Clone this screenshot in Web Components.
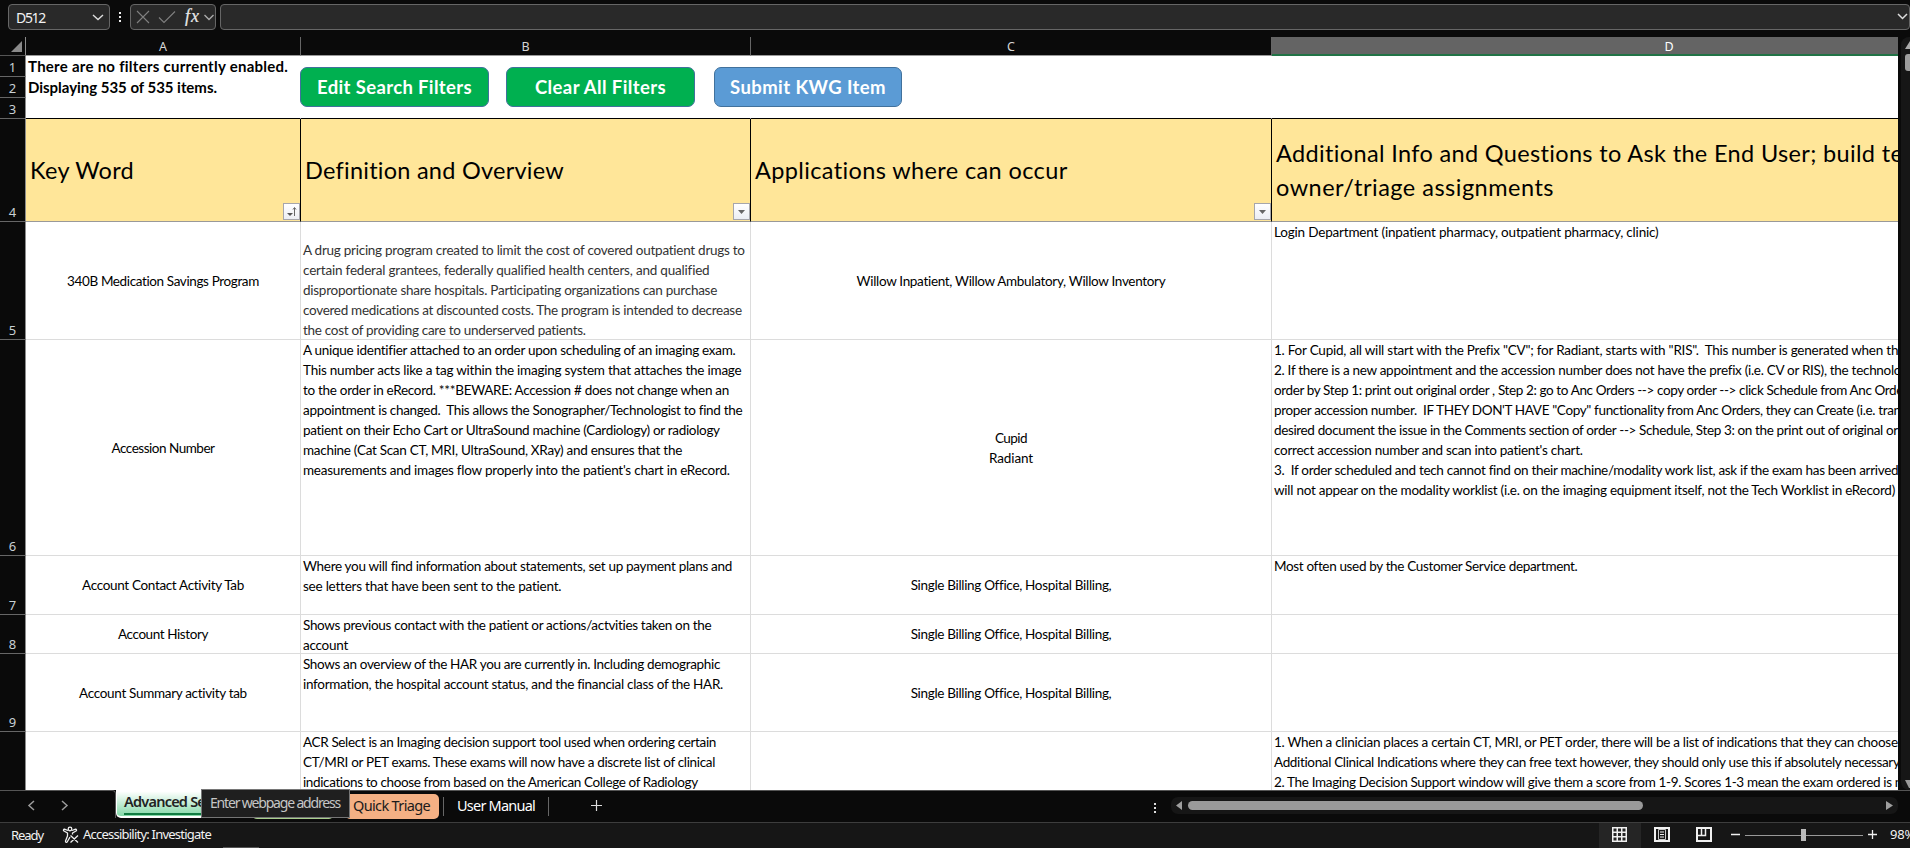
<!DOCTYPE html>
<html lang="en">
<head>
<meta charset="utf-8">
<title>Key Word Guide</title>
<style>
html,body{margin:0;height:100%;overflow:hidden;background:#0a0a0a}
body{font-family:Lato,"Noto Sans",sans-serif;color:#000}
</style>
</head>
<body>
<workbook-app></workbook-app>
<script>
const define=(name,html,ready)=>{
  const t=document.createElement('template');t.innerHTML=html;
  customElements.define(name,class extends HTMLElement{
    constructor(){super();this.attachShadow({mode:'open'}).append(t.content.cloneNode(true));}
    connectedCallback(){if(ready)ready(this,this.shadowRoot);}
  });
};

/* One line of text, tracked so that it fills the width given by "w". */
define('fit-line',`<style>:host{display:block;white-space:pre;width:max-content}span{display:inline-block}</style><span><slot></slot></span>`,
(el,root)=>{
  const s=root.querySelector('span'),n=el.textContent.length,w=+el.getAttribute('w');
  if(!w)return;
  el.style.letterSpacing='0';
  el.style.letterSpacing=((w-s.getBoundingClientRect().width)/n).toFixed(4)+'px';
});

define('formula-bar',`<style>
:host{display:flex;height:37px;padding:4px 0 0 8px;box-sizing:border-box;background:#0a0a0a;font:14px "Noto Sans",sans-serif;color:#f2f2f2}
.box{box-sizing:border-box;height:26px;border:1px solid #666;border-radius:4px;background:#292929;display:flex;align-items:center}
.name{width:102px;padding:0 5px 0 7px;justify-content:space-between}
.dots{width:20px;height:26px}
.tools{width:86px}
.field{flex:1;margin-left:4px;justify-content:flex-end;border-radius:4px}
svg{display:block}
</style>
<div class="box name"><fit-line w="29">D512</fit-line><svg width="12" height="8" fill="none" stroke="#ddd" stroke-width="1.4"><path d="M1 2l5 4.500 5-4.500"/></svg></div>
<svg class="dots" viewBox="0 0 20 26" fill="#eee"><path d="M9 8h2v2H9zM9 12h2v2H9zM9 16h2v2H9z"/></svg>
<div class="box tools"><svg width="84" height="24" fill="none">
<path d="M6 6l12 12M18 6L6 18M28 12.500l5 5L44 6.500" stroke="#808080" stroke-width="1.100"/>
<text x="54" y="17" font-family="Liberation Serif,serif" font-style="italic" font-size="18" fill="#e8e8e8" stroke="#e8e8e8" stroke-width=".2" textLength="14">fx</text>
<path d="M73.500 10l4.500 4.500 4.500-4.500" stroke="#aaa" stroke-width="1.400"/></svg></div>
<div class="box field"><svg width="13" height="10" fill="none" stroke="#ddd" stroke-width="1.500" style="margin-top:-3px"><path d="M2 3l4.500 4.500L11 3"/></svg></div>`);

define('column-heads',`<style>
:host{display:grid;grid-template-columns:26px 275px 450px 521px 627px;height:19px;font:12.500px/20px "Noto Sans",sans-serif;color:#d6d6d6;background:#0a0a0a}
div{box-sizing:border-box;height:19px;border-right:1px solid #666;border-bottom:1px solid #9a9a9a;text-align:center}
.corner{border-right-color:#8c8c8c;border-bottom-color:#555}
.sel{background:#646464;color:#fff;border-right:0;border-bottom:2px solid #217346;padding-left:167px}
svg{display:block}
</style><div class="corner"><svg width="25" height="18"><path d="M22 4v11H11z" fill="#8a8a8a"/></svg></div><div>A</div><div>B</div><div>C</div><div class="sel">D</div>`);

define('sheet-row',`<style>
:host{display:grid;grid-template-columns:26px 275px 450px 521px 627px;background:#fff;--line:#dcdcdc;--vline:#dcdcdc}
.n{box-sizing:border-box;background:#0a0a0a;color:#c8d0d4;border-right:1px solid #8c8c8c;border-bottom:1px solid #666;font:13px/18px "Noto Sans",sans-serif;display:flex;align-items:flex-end;justify-content:center}
:host([nolabel]) .n{border-bottom:0}
:host([plain]){--line:#fff;--vline:#fff}
:host([head]){background:#ffe699;--line:#999;--vline:#000;color:#000}
:host([endtop]){--line:#000}
</style><div class="n"></div><slot></slot>`,
(el,root)=>{el.style.height=el.getAttribute('h')+'px';root.querySelector('.n').textContent=el.getAttribute('n')||'';});

define('sheet-cell',`<style>
:host{display:flex;flex-direction:column;box-sizing:border-box;min-width:0;min-height:0;overflow:hidden;border-right:1px solid var(--vline);border-bottom:1px solid var(--line);padding-left:2px;font-size:13.500px;line-height:20px;position:relative}
:host(:last-child){border-right:0}
:host([mid]){align-items:center;justify-content:center;padding-left:0}
:host([bottom]){justify-content:flex-start;padding-top:18px;color:#333}
:host([title]){justify-content:center;padding-left:4px;font-size:23.500px;line-height:34px}
:host([bold]){font-weight:700;font-size:15px;line-height:21px;overflow:visible;padding-left:2px}
</style><slot></slot>`);

/* Filter drop-down in the corner of a heading cell. */
define('filter-button',`<style>
:host{position:absolute;right:0;bottom:1px;width:17px;height:17px;box-sizing:border-box;border:1px solid #a6a6ab;background:linear-gradient(#fff,#eceef4)}
svg{display:block}
</style><svg width="15" height="15"></svg>`,
(el,root)=>{root.querySelector('svg').innerHTML=el.hasAttribute('sorted')
 ?'<path d="M3 9h6l-3 3z" fill="#555"/><path d="M10.500 12V4M9 5.500L10.500 3.500 12 5.500" fill="none" stroke="#666"/>'
 :'<path d="M4 6h7l-3.500 4z" fill="#666"/>';});

define('shape-button',`<style>
:host{display:flex;align-items:center;justify-content:center;width:189px;height:40px;box-sizing:border-box;border:1px solid #41719c;border-radius:7px;background:var(--fill,#00b050);color:#fff;font-weight:700;font-size:18.500px;line-height:38px}
</style><slot></slot>`);

define('scroll-column',`<style>:host{display:block;width:9px;overflow:hidden;background:#161616;border-radius:8px 0 0 8px}svg{display:block}</style>
<svg width="9" height="753"><path d="M4 12l5-8h2v8z" fill="#aaa"/><rect x="4" y="17" width="12" height="17" rx="3" fill="#9e9e9e"/><path d="M4 743h8v8H8z" fill="#9a9a9a"/></svg>`);

define('sheet-grid',`<style>
:host{display:flex;height:753px;overflow:hidden;background:#0a0a0a}
.main{position:relative;width:1898px;flex:none;overflow:hidden}
.shapes{position:absolute;left:300px;top:30px;display:flex;gap:17px}
scroll-column{margin-left:3px}
</style>
<div class="main">
<column-heads></column-heads>
<sheet-row plain n="1" h="21"><sheet-cell bold><fit-line w="260">There are no filters currently enabled.</fit-line></sheet-cell><sheet-cell></sheet-cell><sheet-cell></sheet-cell><sheet-cell></sheet-cell></sheet-row>
<sheet-row plain n="2" h="21"><sheet-cell bold><fit-line w="189">Displaying 535 of 535 items.</fit-line></sheet-cell><sheet-cell></sheet-cell><sheet-cell></sheet-cell><sheet-cell></sheet-cell></sheet-row>
<sheet-row plain endtop n="3" h="21"><sheet-cell></sheet-cell><sheet-cell></sheet-cell><sheet-cell></sheet-cell><sheet-cell></sheet-cell></sheet-row>
<sheet-row head n="4" h="103">
<sheet-cell title><fit-line w="104">Key Word</fit-line><filter-button sorted></filter-button></sheet-cell>
<sheet-cell title><fit-line w="259">Definition and Overview</fit-line><filter-button></filter-button></sheet-cell>
<sheet-cell title><fit-line w="313">Applications where can occur</fit-line><filter-button></filter-button></sheet-cell>
<sheet-cell title><fit-line w="628">Additional Info and Questions to Ask the End User; build te</fit-line><fit-line w="278">owner/triage assignments</fit-line></sheet-cell></sheet-row>
<sheet-row n="5" h="118"><sheet-cell mid><fit-line w="192">340B Medication Savings Program</fit-line></sheet-cell>
<sheet-cell bottom><fit-line w="442">A drug pricing program created to limit the cost of covered outpatient drugs to</fit-line><fit-line w="406">certain federal grantees, federally qualified health centers, and qualified</fit-line><fit-line w="415">disproportionate share hospitals. Participating organizations can purchase</fit-line><fit-line w="439">covered medications at discounted costs. The program is intended to decrease</fit-line><fit-line w="283">the cost of providing care to underserved patients.</fit-line></sheet-cell>
<sheet-cell mid><fit-line w="309">Willow Inpatient, Willow Ambulatory, Willow Inventory</fit-line></sheet-cell>
<sheet-cell><fit-line w="385">Login Department (inpatient pharmacy, outpatient pharmacy, clinic)</fit-line></sheet-cell></sheet-row>
<sheet-row n="6" h="216"><sheet-cell mid><fit-line w="103">Accession Number</fit-line></sheet-cell>
<sheet-cell><fit-line w="432">A unique identifier attached to an order upon scheduling of an imaging exam.</fit-line><fit-line w="438">This number acts like a tag within the imaging system that attaches the image</fit-line><fit-line w="426">to the order in eRecord. ***BEWARE: Accession # does not change when an</fit-line><fit-line w="439">appointment is changed.  This allows the Sonographer/Technologist to find the</fit-line><fit-line w="417">patient on their Echo Cart or UltraSound machine (Cardiology) or radiology</fit-line><fit-line w="379">machine (Cat Scan CT, MRI, UltraSound, XRay) and ensures that the</fit-line><fit-line w="427">measurements and images flow properly into the patient's chart in eRecord.</fit-line></sheet-cell>
<sheet-cell mid><fit-line w="32">Cupid</fit-line><fit-line w="44">Radiant</fit-line></sheet-cell>
<sheet-cell><fit-line w="624">1. For Cupid, all will start with the Prefix "CV"; for Radiant, starts with "RIS".  This number is generated when th</fit-line><fit-line w="627">2. If there is a new appointment and the accession number does not have the prefix (i.e. CV or RIS), the technolo</fit-line><fit-line w="629">order by Step 1: print out original order , Step 2: go to Anc Orders --&gt; copy order --&gt; click Schedule from Anc Orde</fit-line><fit-line w="627">proper accession number.  IF THEY DON'T HAVE "Copy" functionality from Anc Orders, they can Create (i.e. tran</fit-line><fit-line w="624">desired document the issue in the Comments section of order --&gt; Schedule, Step 3: on the print out of original or</fit-line><fit-line w="309">correct accession number and scan into patient's chart.</fit-line><fit-line w="624">3.  If order scheduled and tech cannot find on their machine/modality work list, ask if the exam has been arrived</fit-line><fit-line w="621">will not appear on the modality worklist (i.e. on the imaging equipment itself, not the Tech Worklist in eRecord)</fit-line></sheet-cell></sheet-row>
<sheet-row n="7" h="59"><sheet-cell mid><fit-line w="162">Account Contact Activity Tab</fit-line></sheet-cell>
<sheet-cell><fit-line w="429">Where you will find information about statements, set up payment plans and</fit-line><fit-line w="258">see letters that have been sent to the patient.</fit-line></sheet-cell>
<sheet-cell mid><fit-line w="200">Single Billing Office, Hospital Billing,</fit-line></sheet-cell><sheet-cell><fit-line w="303">Most often used by the Customer Service department.</fit-line></sheet-cell></sheet-row>
<sheet-row n="8" h="39"><sheet-cell mid><fit-line w="90">Account History</fit-line></sheet-cell>
<sheet-cell><fit-line w="409">Shows previous contact with the patient or actions/actvities taken on the</fit-line><fit-line w="45">account</fit-line></sheet-cell>
<sheet-cell mid><fit-line w="200">Single Billing Office, Hospital Billing,</fit-line></sheet-cell><sheet-cell></sheet-cell></sheet-row>
<sheet-row n="9" h="78"><sheet-cell mid><fit-line w="168">Account Summary activity tab</fit-line></sheet-cell>
<sheet-cell><fit-line w="417">Shows an overview of the HAR you are currently in. Including demographic</fit-line><fit-line w="420">information, the hospital account status, and the financial class of the HAR.</fit-line></sheet-cell>
<sheet-cell mid><fit-line w="200">Single Billing Office, Hospital Billing,</fit-line></sheet-cell><sheet-cell></sheet-cell></sheet-row>
<sheet-row nolabel h="70"><sheet-cell></sheet-cell>
<sheet-cell><fit-line w="413">ACR Select is an Imaging decision support tool used when ordering certain</fit-line><fit-line w="412">CT/MRI or PET exams. These exams will now have a discrete list of clinical</fit-line><fit-line w="395">indications to choose from based on the American College of Radiology</fit-line></sheet-cell>
<sheet-cell></sheet-cell><sheet-cell><fit-line w="624">1. When a clinician places a certain CT, MRI, or PET order, there will be a list of indications that they can choose</fit-line><fit-line w="626">Additional Clinical Indications where they can free text however, they should only use this if absolutely necessary</fit-line><fit-line w="628">2. The Imaging Decision Support window will give them a score from 1-9. Scores 1-3 mean the exam ordered is n</fit-line></sheet-cell></sheet-row>
<div class="shapes"><shape-button><fit-line w="155">Edit Search Filters</fit-line></shape-button><shape-button><fit-line w="131">Clear All Filters</fit-line></shape-button><shape-button style="--fill:#5b9bd5;margin-left:2px;width:188px"><fit-line w="156">Submit KWG Item</fit-line></shape-button></div>
</div><scroll-column></scroll-column>`);

define('sheet-tabs',`<style>
:host{display:flex;position:relative;height:33px;box-sizing:border-box;border-bottom:1px solid #3d3d3d;background:#0a0a0a;font:14.500px/24px "Noto Sans",sans-serif;color:#f2f2f2}
.nav{width:116px;box-sizing:border-box;border-top:1px solid #555;border-right:1px solid #555;border-radius:0 4px 0 0;height:28px}
svg{display:block}
.active{width:124px;height:28px;box-sizing:border-box;padding:0 0 0 7px;border:1px solid #fff;border-top:0;border-bottom-width:2px;border-radius:0 0 5px 5px;background:linear-gradient(#fff 5%,#84d9a8);color:#222;font-weight:600;overflow:hidden}
.active fit-line{margin-top:-1px}
.active i{display:block;height:2px;background:#107c41;margin:0 8px 0 0}
.rest{flex:1;border-top:1px solid #555;display:flex;align-items:flex-start;padding:3px 0 0 12px;box-sizing:border-box}
.t{box-sizing:border-box;height:25px;border-radius:5px}
.g{width:82px;background:#a9d08e;margin-right:11px}
.q{width:94px;background:#f4b084;color:#1b1b1b;padding:0 0 0 8px;margin-right:4px;line-height:23px}
.m{width:106px;border:solid #666;border-width:0 1px;border-radius:0;height:19px;margin-top:3px;padding-left:13px;line-height:17px;color:#fff}
.tip{position:absolute;left:201px;top:-1px;width:149px;height:29px;box-sizing:border-box;border:1px solid #767676;background:#1f1f1f;color:#c6c6c6;padding-left:8px;line-height:25px;font-size:14px}
.h{width:751px;margin-left:auto;margin-right:12px}
</style>
<svg class="nav" viewBox="0 0 115 27" fill="none" stroke="#9a9a9a" stroke-width="1.500"><path d="M34 10l-5 4.500 5 4.500M62 10l5 4.500-5 4.500"/></svg>
<div class="active"><fit-line w="109">Advanced Search</fit-line><i></i></div>
<div class="rest"><div class="t g"></div><div class="t q"><fit-line w="77">Quick Triage</fit-line></div><div class="t m"><fit-line w="78">User Manual</fit-line></div>
<svg width="60" height="26" style="margin-left:12px" fill="none" stroke="#ddd" stroke-width="1.200"><path d="M30 11.500h11M35.500 6v11"/></svg>
<svg class="h" width="751" height="26"><path d="M7 9h2v2H7zM7 13h2v2H7zM7 17h2v2H7z" fill="#ddd"/><rect x="24" y="3" width="727" height="17" rx="7" fill="#161616"/><path d="M35 7v9l-6-4.500zM739 7v9l7-4.500z" fill="#9e9e9e"/><rect x="41" y="7" width="455" height="9" rx="4.500" fill="#9a9a9a"/></svg>
</div><div class="tip"><fit-line w="130">Enter webpage address</fit-line></div>`);

define('status-bar',`<style>
:host{display:flex;height:25px;background:#161616;font:13px/24px "Noto Sans",sans-serif;color:#f2f2f2;position:relative}
:host::after{content:"";position:absolute;left:223px;bottom:0;width:36px;height:1px;background:#555}
svg{display:block}
.ready{width:51px;padding-left:11px}.views{margin-left:auto}
.pct{width:20px;overflow:hidden;white-space:nowrap}
.acc,.pct{margin-top:-1px}
</style>
<div class="ready"><fit-line w="32">Ready</fit-line></div>
<svg width="21" height="24" fill="none" stroke="#f0f0f0" stroke-width="1.300" stroke-linejoin="round"><circle cx="8" cy="6" r="1.800"/><path d="M6 7.500L2.500 6.200C1.500 6 1 7.500 2 8L5.500 10v3L3.500 18c-.3 1.500 1.300 1.800 1.800.8L8 14M10 7.500l3.500-1.300c1-.2 1.500 1.300.5 1.800L10.500 10v1.500M8.500 12.500l7.500 7M16 12.500l-7.500 7"/></svg>
<fit-line class="acc" w="128">Accessibility: Investigate</fit-line>
<svg class="views" width="291" height="25">
<path d="M0 0h42v25H0z" fill="#252525"/><path d="M13 4h15v15H13z" fill="#f0f0f0"/><path d="M14.500 5.500h3v3h-3zM19 5.500h3v3h-3zM23.500 5.500h3v3h-3zM14.500 10h3v3h-3zM19 10h3v3h-3zM23.500 10h3v3h-3zM14.500 14.500h3v3h-3zM19 14.500h3v3h-3zM23.500 14.500h3v3h-3z" fill="#252525"/>
<g fill="none" stroke="#f0f0f0"><path d="M56 5h14v13H56z" stroke-width="2"/><path d="M59.500 6.500h7v10h-7z" stroke="#c8c8c8"/><path d="M61 9h4M61 11.500h4M61 14h4"/><path d="M98 5h14v13H98z" stroke-width="2"/><path d="M98 12.500h8.500V5M102.500 5v7" stroke-width="1.500"/><path d="M132 11.500h9M269 11.500h9M273.500 7v9" stroke-width="1.300"/><path d="M146 12.500h118" stroke="#999"/></g><path d="M202 6h5v12h-5z" fill="#bababa"/></svg>
<div class="pct"><fit-line w="25">98%</fit-line></div>`);

define('workbook-app',`<style>:host{display:flex;flex-direction:column;width:1910px;height:848px;overflow:hidden}</style>
<formula-bar></formula-bar><sheet-grid></sheet-grid><sheet-tabs></sheet-tabs><status-bar></status-bar>`);
</script>
</body>
</html>
